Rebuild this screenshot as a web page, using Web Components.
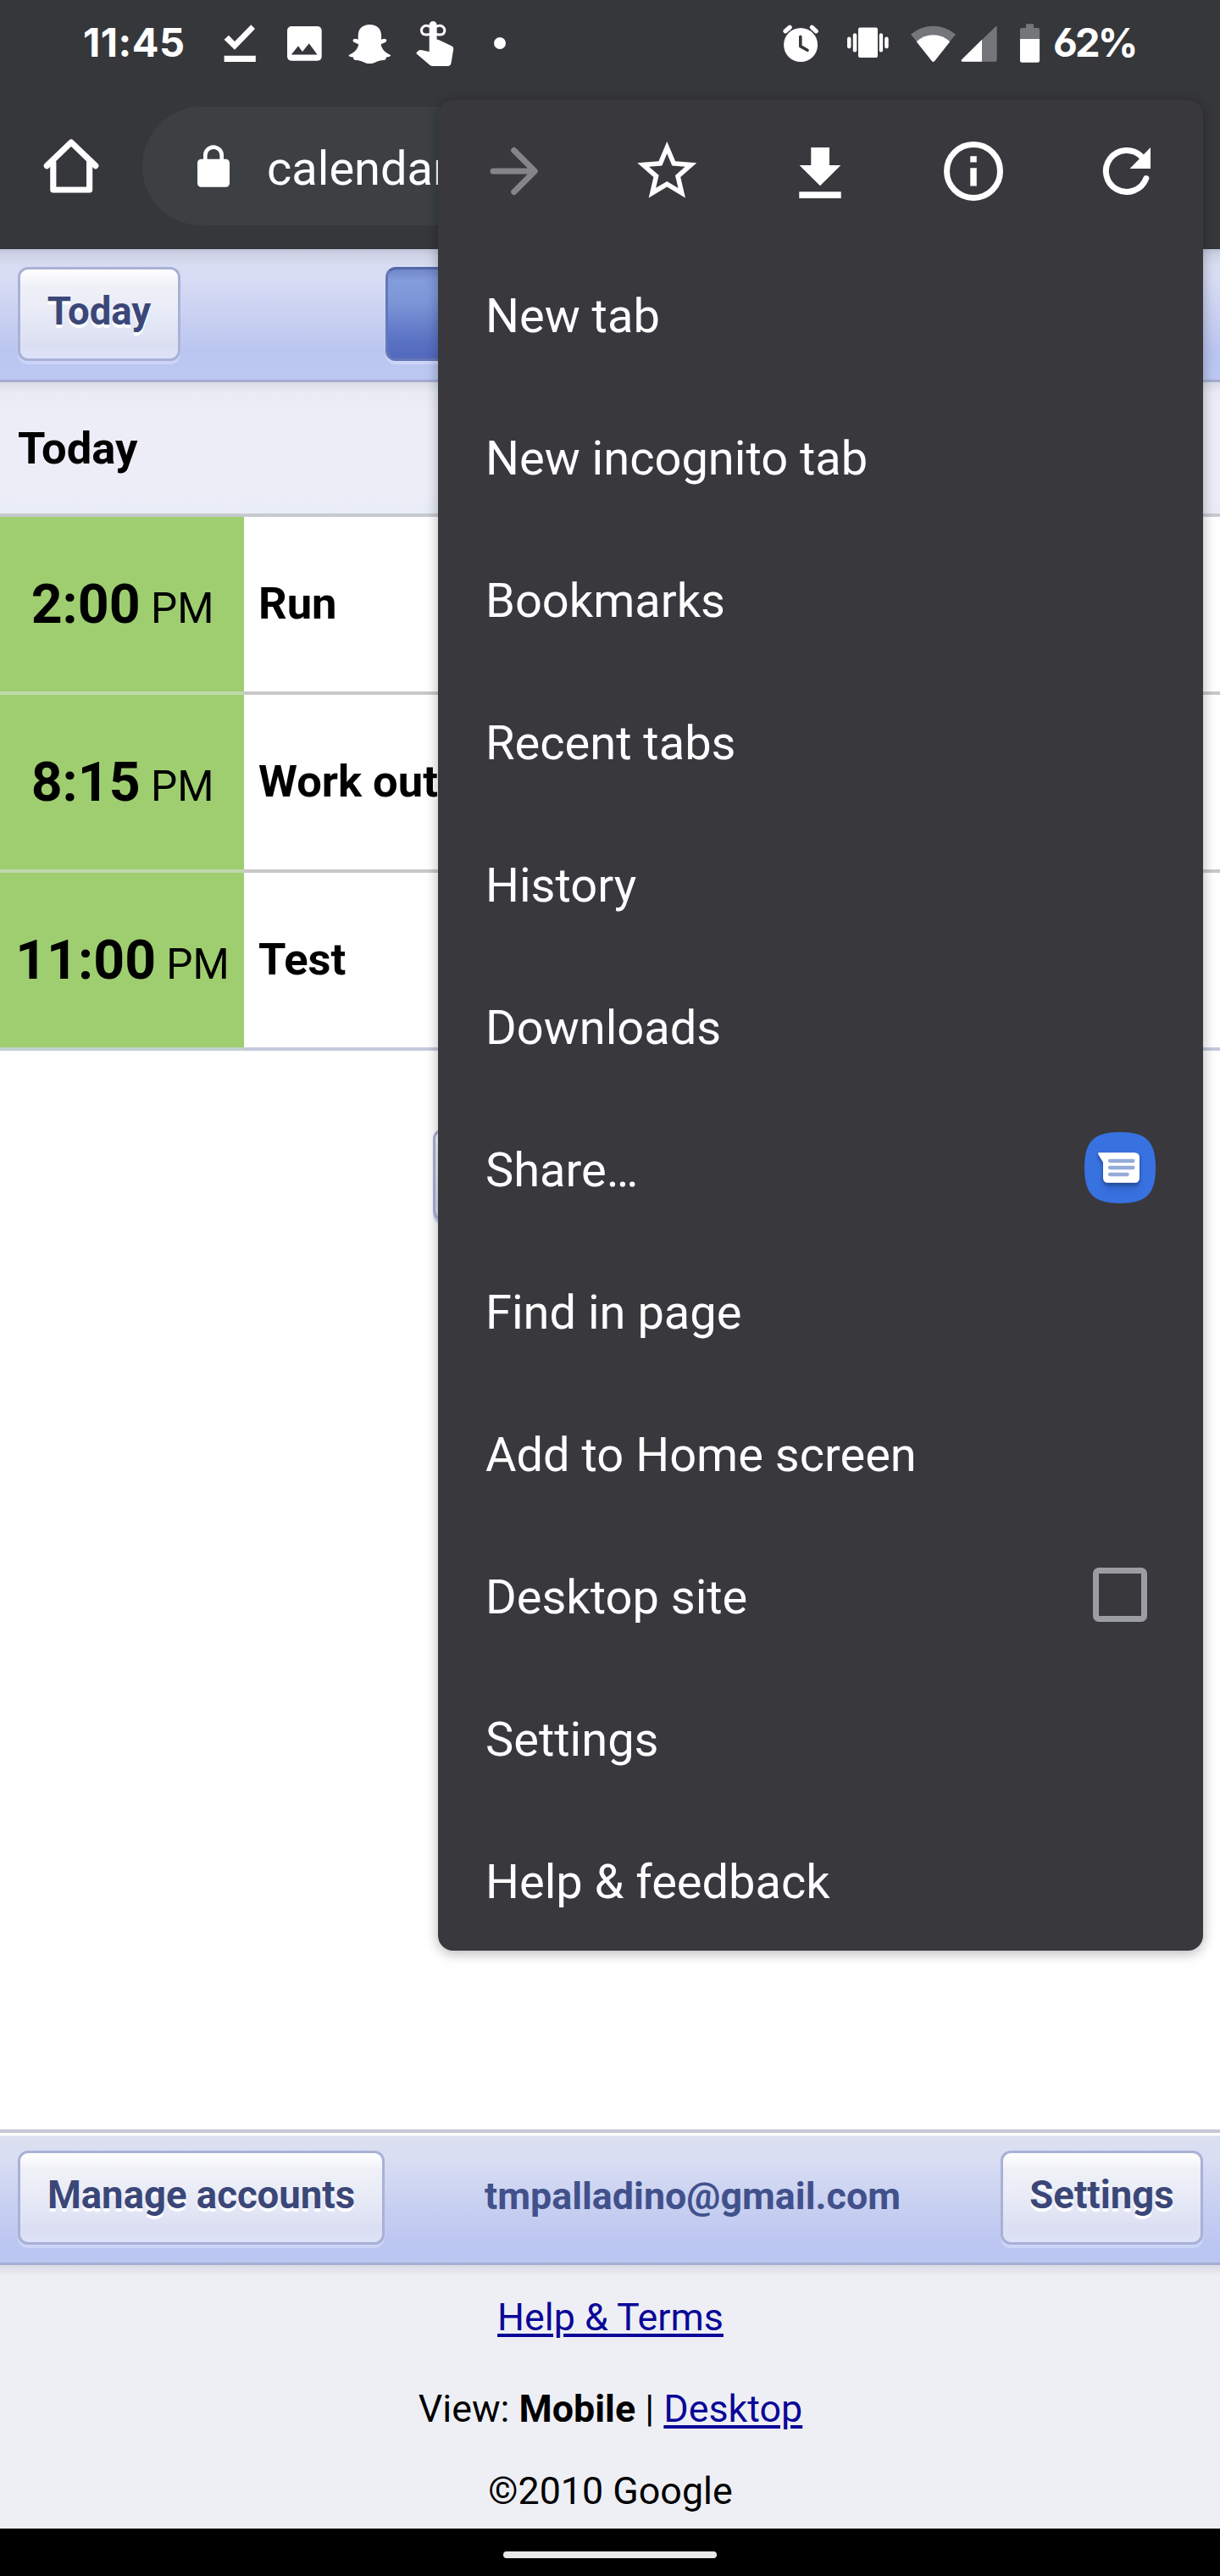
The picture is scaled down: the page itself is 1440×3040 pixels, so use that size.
<!DOCTYPE html>
<html lang="en">
<head>
<meta charset="utf-8">
<title>Calendar</title>
<style>
html,body{margin:0;padding:0;background:#fff}
body{width:1440px;height:3040px;overflow:hidden;font-family:Roboto,"Liberation Sans",sans-serif;color:#000}
</style>
</head>
<body>
<phone-screen>
  <status-bar slot="status"></status-bar>
  <browser-toolbar slot="toolbar">calendar</browser-toolbar>
  <calendar-page slot="page"></calendar-page>
  <nav-bar slot="nav"></nav-bar>
  <overflow-menu slot="menu">
    <menu-item>New tab</menu-item>
    <menu-item>New incognito tab</menu-item>
    <menu-item>Bookmarks</menu-item>
    <menu-item>Recent tabs</menu-item>
    <menu-item>History</menu-item>
    <menu-item>Downloads</menu-item>
    <menu-item>Share…<messages-icon slot="end"></messages-icon></menu-item>
    <menu-item>Find in page</menu-item>
    <menu-item>Add to Home screen</menu-item>
    <menu-item>Desktop site<check-box slot="end"></check-box></menu-item>
    <menu-item>Settings</menu-item>
    <menu-item>Help &amp; feedback</menu-item>
  </overflow-menu>
</phone-screen>
<script>
const define = (name, html) => customElements.define(name, class extends HTMLElement {
  constructor() {
    super();
    this.attachShadow({ mode: 'open' }).innerHTML = html;
  }
});

define('phone-screen', `
<style>
:host{display:flex;flex-direction:column;position:relative;width:1440px;height:3040px;overflow:hidden;background:#fff}
</style>
<slot name="status"></slot><slot name="toolbar"></slot><slot name="page"></slot><slot name="nav"></slot><slot name="menu"></slot>`);

define('status-bar', `
<style>
:host{display:flex;align-items:center;box-sizing:border-box;height:104px;flex:none;padding-left:98px;background:#36373b;color:#fff;
 font:700 47px/60px Inter,Roboto,sans-serif}
svg{height:64px;flex:none;fill:#fff}
.t{width:166px;padding-bottom:4px;letter-spacing:.5px;white-space:nowrap}
.b{width:197px;padding-bottom:4px;letter-spacing:-2.8px;font-feature-settings:"ss01","cv03";white-space:nowrap}
.dim{fill:#757679}
</style>
<span class="t">11:45</span>
<svg style="width:39px" viewBox="264 20 39 64"><path d="M264.6 46.7 269.9 41.7 277 49 296.3 29.3 301 34 277 58.7ZM264.6 65.7H301.8V73H264.6Z"/></svg>
<svg style="width:43px;margin-left:35px" viewBox="338 20 43 64"><rect x="339" y="31" width="40.7" height="40.7" rx="5"/><path fill="#36373b" d="M343.8 64.6 352 54.2 356.9 61 364.8 51.2 374.5 64.6Z"/></svg>
<svg style="width:51px;margin-left:30px" viewBox="411 20 51 64"><path d="M436.4 29C428 29 422.7 34 422.7 42V46.7Q420 45.5 418 46 415.6 47 417.2 49.4L423.2 52.2C422.5 58 417.5 62.5 411.6 65 411.4 66.3 413.8 67.2 416.8 67.6 417.2 70.2 418 71 420 70.9 427 70.6 429.5 75 436.4 75S445.8 70.6 452.8 70.9C454.8 71 455.6 70.2 456 67.6 459 67.2 461.4 66.3 461.2 65 455.3 62.5 450.3 58 449.6 52.2L455.6 49.4Q457.2 47 454.8 46 452.8 45.5 450.1 46.7V42C450.1 34 444.8 29 436.4 29Z"/></svg>
<svg style="width:46px;margin-left:29px" viewBox="491 20 46 64"><path d="M506.7 29.5A4.45 4.45 0 0 1 515.6 29.5V46.5L519 47.5 533 54.2Q535.5 55.3 535.3 57.5L532.6 74Q532 78 528.5 78H511Q508.4 78 507 76.4L492 63.8Q491 62.6 492 61.5L494 59.7Q495.2 58.7 497 59L506.7 61Z"/><g fill="none" stroke="#fff" stroke-width="3"><path d="M507.5 31.5Q503 29.3 500 31.2C496.5 33.5 496.8 38.5 500 40.4Q502 41.3 507.5 40.6M514.8 31.5Q519.3 29.3 522.3 31.2C525.8 33.5 525.5 38.5 522.3 40.4Q520.3 41.3 514.8 40.6"/></g></svg>
<svg style="width:16px;margin-left:45px" viewBox="582 20 16 64"><circle cx="590" cy="51" r="7"/></svg>

<svg style="width:45px;margin-left:auto" viewBox="923 20 45 64"><circle cx="945.1" cy="53" r="20"/><path stroke="#fff" stroke-width="5.2" stroke-linecap="round" fill="none" d="M927 36.8 932.2 32.2M958.3 32.2 963.3 36.8"/><path stroke="#36373b" stroke-width="3.6" stroke-linecap="round" stroke-linejoin="round" fill="none" d="M944.8 43.2V54.6L953 59.3"/></svg>
<svg style="width:51px;margin-left:31px" viewBox="999 20 51 64"><rect x="1013" y="32.6" width="23" height="35.4" rx="2"/><rect x="1006.8" y="39.3" width="4.5" height="22.2" rx="2.2"/><rect x="1000" y="43.5" width="4.5" height="13.8" rx="2.2"/><rect x="1037.8" y="39.3" width="4.3" height="22.2" rx="2.2"/><rect x="1044.2" y="43.5" width="4.5" height="13.8" rx="2.2"/></svg>
<svg style="width:55px;margin-left:24px" viewBox="1074 20 55 64"><path class="dim" d="M1101.5 73 1075 40.5Q1087 30.7 1101.5 30.7T1128 40.5Z"/><path d="M1101.5 73Q1100.8 73 1100 72.2L1081.8 49.3Q1090 41.3 1101.5 41.3T1121.2 49.3L1103 72.2Q1102.2 73 1101.5 73Z"/></svg>
<svg style="width:45px;margin-left:4px" viewBox="1133 20 45 64"><path class="dim" d="M1136 72.7H1175.5Q1176.6 72.7 1176.6 71.6V32Q1176.4 30.6 1175 31.4L1135 70.5Q1134 72.7 1136 72.7Z"/><path d="M1136 72.7H1159V46.8L1135 70.5Q1134 72.7 1136 72.7Z"/></svg>
<svg style="width:25px;margin-left:25px" viewBox="1203 20 25 64"><path class="dim" d="M1211 28.3H1220V33H1225Q1227.1 33 1227.1 35.2V46H1204V35.2Q1204 33 1206 33H1211Z"/><path d="M1204 46H1227.1V71.2Q1227.1 73.7 1224.6 73.7H1206.5Q1204 73.7 1204 71.2Z"/></svg>
<span class="b" style="margin-left:15px">62%</span>`);

define('browser-toolbar', `
<style>
:host{display:flex;box-sizing:border-box;height:190px;flex:none;padding:22px 24px 28px 42px;background:#36373b;color:#fff}
.home{width:84px;height:84px;margin-top:28px;flex:none}
.pill{display:flex;align-items:center;height:140px;flex:1;margin-left:42px;border-radius:70px;background:#3c4043;font-size:56px}
.lock{width:40px;height:52px;margin:0 43px 0 64px;flex:none}
.url{padding-top:6px}
</style>
<svg class="home" viewBox="42 154 84 84" fill="none" stroke="#fff" stroke-width="7.2" stroke-linejoin="round" stroke-linecap="round"><path d="M55.3 195.7 84 168 112.8 195.7"/><path d="M62.8 192V224H105.6V192"/></svg>
<div class="pill"><svg class="lock" viewBox="232 169 40 52"><rect x="233" y="186.7" width="38" height="33" rx="4.5" fill="#fff"/><path d="M242.3 188V182.3A9.7 9.7 0 0 1 261.7 182.3V188" fill="none" stroke="#fff" stroke-width="4.6"/></svg><span class="url"><slot></slot></span></div>`);

define('calendar-button', `
<style>
:host{display:flex;align-items:center;justify-content:center;box-sizing:border-box;height:111px;flex:none;padding:0 0 6px;
 border:3.5px solid #a9b1d6;border-radius:12px;background:linear-gradient(#fff,#f0f1f7 18%,#e9ecf7 45%,#dbdff2 85%,#dde3f8);box-shadow:0 4px 1px #cdd6f8;
 color:#3b4778;font-size:45.5px;font-weight:700;text-shadow:0 4px 1px #fff;white-space:nowrap}
:host([active]){border-color:#6478b9;border-top-color:#5467a8;background:linear-gradient(#7086c8,#829cdc 12%,#7d97d8 35%,#5a72c3 80%,#5369bd)}
</style><slot></slot>`);

define('agenda-row', `
<style>
:host{display:flex;box-sizing:border-box;height:210px;flex:none;border-bottom:4px solid #c8c8c9;font-size:52.5px}
.time{display:flex;align-items:baseline;justify-content:center;box-sizing:border-box;width:288px;height:210px;padding-left:1px;flex:none;background:linear-gradient(#9fce70 206px,var(--edge,#c0d8ad) 206px);font-size:49.5px;line-height:207px;white-space:pre}
b{font-size:64.4px}
.title{padding-left:17px;line-height:204px;font-weight:700}
:host([last]){border-color:#c5c9dc;--edge:#c2d0d0}
</style>
<div class="time"><div><b><slot name="time"></slot></b> PM</div></div><div class="title"><slot></slot></div>`);

define('calendar-page', `
<style>
:host{display:flex;flex-direction:column;height:2690px;flex:none;background:#fff}
.bar{display:flex;align-items:flex-start;box-sizing:border-box;flex:none;padding:0 20px 0 21px;border-bottom:3px solid #a5add2}
.top{height:157px;padding-top:21px;background:linear-gradient(#bfc3d7,#cfd3e7 7px,#d9ddf3 20px,#d8ddf5 34px,#c7cff1 85px,#bac5f0 122px,#bcc8f2)}
.top [active]{width:530px;margin-left:242px}
.section{box-sizing:border-box;height:159px;flex:none;padding:0 21px;border-bottom:4px solid #c8c9ce;background:linear-gradient(#d9dce4,#e9ecf4 13px,#ecedf6 30px,#ecedf6 85%,#e8ecf8);font-size:52.5px;font-weight:700;line-height:157px}
.more{display:flex;justify-content:center;flex:1;padding-top:92px}
.more calendar-button{width:418px;height:109px}
.account{height:160px;padding-top:21px;border-top:4px solid #c7c8d7;justify-content:space-between;background:linear-gradient(#fff 3px,#dbdfef 4px,#d9def3 30px,#c8d0f1 85px,#bac5f1 138px,#bbc6f1)}
.mail{color:#42518b;font-size:44.8px;font-weight:700;line-height:108px}
.foot{display:flex;flex-direction:column;align-items:center;box-sizing:border-box;height:311px;flex:none;padding-left:1px;background:linear-gradient(#d9dbe4,#e6e7ec 8px,#eeeff5 14px);font-size:44.8px;line-height:56px}
a{color:#0b0798;text-decoration:underline;text-decoration-thickness:4px;text-underline-offset:3.5px}
</style>
<div class="bar top"><calendar-button style="width:192px">Today</calendar-button><calendar-button active></calendar-button></div>
<div class="section">Today</div>
<agenda-row><span slot="time">2:00</span>Run</agenda-row>
<agenda-row><span slot="time">8:15</span>Work out</agenda-row>
<agenda-row last><span slot="time">11:00</span>Test</agenda-row>
<div class="more"><calendar-button></calendar-button></div>
<div class="bar account"><calendar-button style="width:433px">Manage accounts</calendar-button><span class="mail">tmpalladino@gmail.com</span><calendar-button style="width:239px">Settings</calendar-button></div>
<div class="foot">
<div style="margin-top:34px"><a>Help &amp; Terms</a></div>
<div style="margin-top:52px">View: <b>Mobile</b> | <a>Desktop</a></div>
<div style="margin-top:41px">©2010 Google</div>
</div>`);

define('nav-bar', `
<style>:host{display:flex;justify-content:center;height:56px;flex:none;background:#000}
i{width:252px;height:8px;margin-top:27px;border-radius:4px;background:#e9e9e9}</style><i></i>`);

define('menu-item', `
<style>
:host{display:flex;align-items:center;justify-content:space-between;height:168px;flex:none;padding:0 56px;font-size:56px;color:#fff;white-space:nowrap}
.l{padding-top:6px}
</style><span class="l"><slot></slot></span><slot name="end"></slot>`);

define('messages-icon', `
<style>:host{display:block;width:84px;height:84px}svg{display:block}</style>
<svg width="84" height="84" viewBox="0 0 84 84"><defs><linearGradient id="g" x1="0" y1="0" x2="0" y2="1"><stop offset="0" stop-color="#2c56ad"/><stop offset="1" stop-color="#3871e0"/></linearGradient><filter id="s" x="-20%" y="-20%" width="140%" height="160%"><feDropShadow dx="0" dy="2.5" stdDeviation="2" flood-color="#12295c" flood-opacity=".65"/></filter></defs>
<path fill="#3871e0" d="M42 0C73 0 84 11 84 42S73 84 42 84 0 73 0 42 11 0 42 0Z"/>
<path fill="url(#g)" opacity=".55" d="M24 59H63L61 74H28Z" style="filter:blur(4px)"/>
<path fill="#fff" filter="url(#s)" d="M17 24.3H59Q65 24.3 65 30.3V53.7Q65 59.7 59 59.7H28Q22 59.7 22 53.7V35.5L16.2 26Q15.6 24.3 17 24.3Z"/>
<path stroke="#95acda" stroke-width="4.3" stroke-linecap="round" d="M30 34H57.4M30 42H57.4M30 50H50.6"/></svg>`);

define('check-box', `
<style>:host{display:block;box-sizing:border-box;width:64px;height:64px;margin-right:10px;border:7px solid #9c9da2;border-radius:7px}</style>`);

define('overflow-menu', `
<style>
:host{position:absolute;left:517px;top:118px;width:903px;height:2184px;display:flex;flex-direction:column;border-radius:18px;background:#39383c;box-shadow:0 3px 15px rgba(0,0,0,.3)}
.icons{display:flex;height:168px;flex:none}
.icons span{display:flex;flex:1;align-items:center;justify-content:center}
svg{width:84px;height:84px;fill:none;stroke:#fff;stroke-width:7}
</style>
<div class="icons">
<span><svg viewBox="0 0 84 84" style="stroke:#858488" stroke-linecap="round" stroke-linejoin="round"><path d="M17 42H66M41.7 17.5 66.2 42 41.7 66.5"/></svg></span>
<span><svg viewBox="0.2 0 24 24" style="fill:#fff;stroke:none"><path d="M22 9.24l-7.19-.62L12 2 9.19 8.63 2 9.24l5.46 4.73L5.82 21 12 17.27 18.18 21l-1.63-7.03L22 9.24zM12 15.4l-3.76 2.27 1-4.28-3.32-2.88 4.38-.38L12 6.1l1.71 4.04 4.38.38-3.32 2.88 1 4.28L12 15.4z"/></svg></span>
<span><svg viewBox="0 0 84 84" style="fill:#fff;stroke:none"><path d="M31.3 14H53V35H66.4L42 59.3 17.6 35H31.3ZM17.3 66.2H66.7V74H17.3Z"/></svg></span>
<span><svg viewBox="0 0 84 84"><circle cx="42" cy="42" r="31.5"/><path d="M42 24.3V31.4M42 38.2V59.6" stroke-width="7.5"/></svg></span>
<span><svg viewBox="0 0 84 84"><path stroke-linecap="round" d="M64.8 50.5A24.5 24.5 0 1 1 59.3 24.7"/><path style="fill:#fff;stroke:none" d="M70 14V39H45.5Z"/></svg></span>
</div>
<slot></slot>`);
</script>
</body>
</html>
